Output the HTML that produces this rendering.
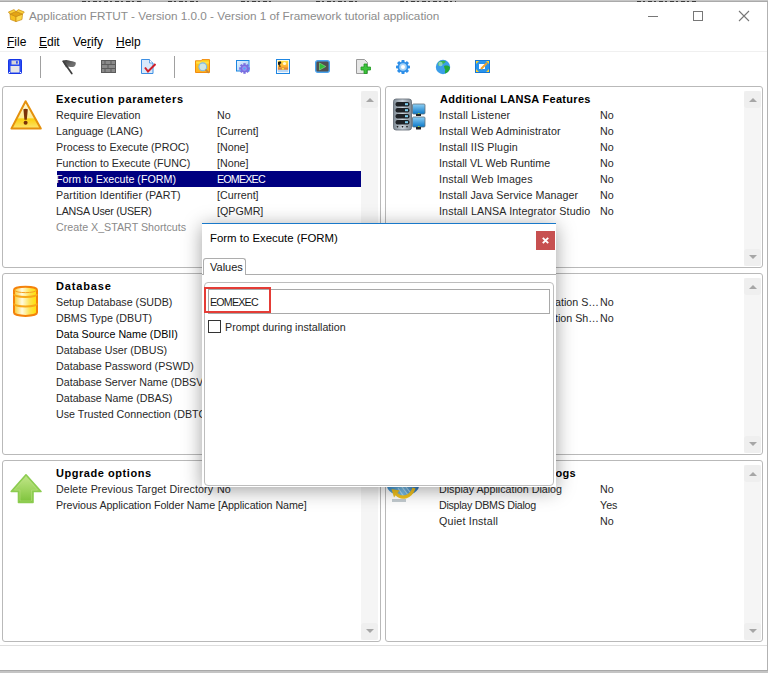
<!DOCTYPE html>
<html><head><meta charset="utf-8">
<style>
*{margin:0;padding:0;box-sizing:border-box}
html,body{width:768px;height:673px;overflow:hidden;background:#fff;position:relative;font-family:"Liberation Sans",sans-serif;}
.a{position:absolute}
.t{position:absolute;font-size:10.7px;line-height:16px;color:#282828;white-space:nowrap}
.b{font-weight:bold;color:#000;letter-spacing:0.3px;font-size:11px}
.panel{position:absolute;border:1px solid #b9b9b9;border-radius:3px;background:#fff;width:379px;height:182px}
.sb{position:absolute;width:17px;background:#f5f5f5}
.sbb{position:absolute;left:0;width:17px;height:17px;background:#efefef;border-radius:3px}
.up{position:absolute;left:5px;top:7px;width:0;height:0;border-left:4.5px solid transparent;border-right:4.5px solid transparent;border-bottom:4.5px solid #a6a6a6}
.dn{position:absolute;left:5px;top:6px;width:0;height:0;border-left:4.5px solid transparent;border-right:4.5px solid transparent;border-top:4.5px solid #a6a6a6}
.menu{position:absolute;top:35px;font-size:12px;line-height:14px;color:#000}
.menu u{text-decoration:underline;text-underline-offset:1px;text-decoration-thickness:1px}
</style></head><body>
<!-- top gray strip -->
<div class="a" style="left:0;top:0;width:768px;height:1px;background:#c6c6c6"></div>
<div class="a" style="left:0;top:1px;width:768px;height:1px;background:#aaaaaa"></div>
<div class="a" style="left:767px;top:2px;width:1px;height:668px;background:#b2b2b2"></div>
<div class="a" style="left:0;top:670px;width:768px;height:1px;background:#a9a9a9"></div>
<div class="a" style="left:0;top:671px;width:768px;height:2px;background:#c4c4c4"></div>

<!-- title -->
<div class="t" style="left:29px;top:8px;font-size:11.75px;line-height:16px;color:#8c8c8c">Application FRTUT - Version 1.0.0 - Version 1 of Framework tutorial application</div>

<!-- window buttons -->
<div class="a" style="left:648px;top:16px;width:10px;height:1px;background:#777"></div>
<div class="a" style="left:693px;top:11px;width:10px;height:10px;border:1px solid #777"></div>
<svg class="a" style="left:738px;top:10px" width="12" height="12"><path d="M1 1L11 11M11 1L1 11" stroke="#777" stroke-width="1.1"/></svg>

<!-- menu -->
<div class="menu" style="left:7px"><u>F</u>ile</div>
<div class="menu" style="left:39px"><u>E</u>dit</div>
<div class="menu" style="left:73px">Ve<u>r</u>ify</div>
<div class="menu" style="left:116px"><u>H</u>elp</div>
<div class="a" style="left:0;top:51px;width:767px;height:1px;background:#f0f0f0"></div>

<!-- status line -->
<div class="a" style="left:0;top:645px;width:767px;height:1px;background:#dedede"></div>

<!-- panels -->
<div class="panel" style="left:2px;top:86px"></div>
<div class="panel" style="left:385px;top:86px;width:378px"></div>
<div class="panel" style="left:2px;top:273px;height:182px"></div>
<div class="panel" style="left:385px;top:273px;width:378px;height:182px"></div>
<div class="panel" style="left:2px;top:460px;height:182px"></div>
<div class="panel" style="left:385px;top:460px;width:378px;height:182px"></div>


<!-- title icon -->
<svg class="a" style="left:8px;top:9px" width="17" height="14" viewBox="0 0 17 14">
<g stroke="#c98a12" stroke-width="0.7" stroke-linejoin="round">
<path d="M2 5 L8 7.5 L8 12.6 L2.5 10.5 Z" fill="#f6c01e"/>
<path d="M8 7.5 L14.5 5 L14 10.5 L8 12.6 Z" fill="#fcd84a"/>
<path d="M2 5 L8 2.5 L14.5 5 L8 7.5 Z" fill="#e3a414"/>
<path d="M2 5 L0.4 3 L6 0.6 L8 2.5 Z" fill="#fbd23a"/>
<path d="M8 2.5 L10.5 0.6 L16.3 3 L14.5 5 Z" fill="#fbd23a"/>
</g>
</svg>

<!-- toolbar -->
<svg class="a" style="left:8px;top:59px" width="14" height="15" viewBox="0 0 14 15">
<rect x="0.5" y="0.5" width="13" height="14" rx="0.8" fill="#2a4cf2" stroke="#1636e6"/>
<rect x="3.5" y="1.5" width="7.5" height="4" fill="#d6d6d6"/><rect x="8" y="2.2" width="1.8" height="2.4" fill="#2a4cf2"/>
<rect x="2.5" y="7" width="9" height="6.5" fill="#e6e6e6"/>
<rect x="1" y="13" width="1" height="1" fill="#fff"/><rect x="12" y="13" width="1" height="1" fill="#fff"/>
</svg>
<div class="a" style="left:40px;top:56px;width:1px;height:22px;background:#a0a0a0"></div>
<svg class="a" style="left:61px;top:59px" width="16" height="16" viewBox="0 0 16 16">
<defs><linearGradient id="flg" x1="0" y1="0" x2="1" y2="1"><stop offset="0" stop-color="#3a3a3a"/><stop offset="0.6" stop-color="#6a6a6a"/><stop offset="1" stop-color="#7a7a7a"/></linearGradient></defs>
<path d="M1.5 2.2 C3.5 0.8 6 0.6 8 1.6 C10 2.6 12.5 2.2 14.8 3.6 C15 5.6 14 7.8 12 8 C10 8.2 8.5 7.2 6.5 8 L5 8.5 Z" fill="url(#flg)"/>
<path d="M2.2 2.2 L10.8 14.6" stroke="#3f3f3f" stroke-width="1.7" stroke-linecap="round"/>
</svg>
<svg class="a" style="left:101px;top:60px" width="15" height="13" viewBox="0 0 15 13">
<rect x="0" y="0" width="15" height="13" fill="#5b5b5b"/>
<g fill="#8a8a8a"><rect x="1" y="1" width="2.5" height="3"/><rect x="4.5" y="1" width="5" height="3"/><rect x="10.5" y="1" width="3.5" height="3"/>
<rect x="1" y="5" width="5.5" height="3"/><rect x="7.5" y="5" width="6.5" height="3"/>
<rect x="1" y="9" width="2.5" height="3"/><rect x="4.5" y="9" width="5" height="3"/><rect x="10.5" y="9" width="3.5" height="3"/></g>
</svg>
<svg class="a" style="left:141px;top:59px" width="15" height="15" viewBox="0 0 15 15">
<path d="M0.5 0.5 H8.5 L12 4 V14.5 H0.5 Z" fill="#d8e9fb" stroke="#3d8fe3"/>
<path d="M8.5 0.5 V4 H12" fill="#fff" stroke="#3d8fe3" stroke-width="0.8"/>
<path d="M4 8.5 L7 12.5 L14.5 5" fill="none" stroke="#d0202a" stroke-width="2"/>
</svg>
<div class="a" style="left:174px;top:56px;width:1px;height:22px;background:#a0a0a0"></div>
<svg class="a" style="left:195px;top:59px" width="16" height="16" viewBox="0 0 16 16">
<defs><linearGradient id="fg" x1="0" y1="0" x2="0" y2="1"><stop offset="0" stop-color="#ffd21a"/><stop offset="1" stop-color="#ffb020"/></linearGradient></defs>
<path d="M0.5 1.8 H6 L7 0.6 H14.5 V13.5 H0.5 Z" fill="url(#fg)" stroke="#f28c0f" stroke-width="1"/>
<rect x="1.2" y="2.6" width="12.6" height="2" fill="#ffe14a"/>
<circle cx="7.8" cy="7.8" r="3.9" fill="#cfe6e4" stroke="#7cb8e8" stroke-width="1.1"/>
<path d="M10.6 10.6 L13.8 13.8" stroke="#c98a3a" stroke-width="1.8"/>
</svg>
<svg class="a" style="left:236px;top:59px" width="16" height="16" viewBox="0 0 16 16">
<defs><linearGradient id="bg2" x1="0" y1="0" x2="1" y2="1"><stop offset="0" stop-color="#eaf4ff"/><stop offset="1" stop-color="#9cc8f4"/></linearGradient></defs>
<rect x="0.5" y="1.5" width="12.5" height="10.5" fill="url(#bg2)" stroke="#1d86e0"/>
<g transform="translate(8.5,9.5)" fill="#7a6fe0">
<circle r="3.8"/>
<rect x="-1.2" y="-5.3" width="2.4" height="10.6"/>
<rect x="-1.2" y="-5.3" width="2.4" height="10.6" transform="rotate(45)"/>
<rect x="-1.2" y="-5.3" width="2.4" height="10.6" transform="rotate(90)"/>
<rect x="-1.2" y="-5.3" width="2.4" height="10.6" transform="rotate(135)"/>
</g>
<circle cx="8.5" cy="9.5" r="2.4" fill="#9a90f0"/><circle cx="8.5" cy="9.5" r="1.1" fill="#40b0f8"/>
</svg>
<svg class="a" style="left:276px;top:59px" width="14" height="15" viewBox="0 0 14 15">
<defs><linearGradient id="ig" x1="0" y1="0" x2="0" y2="1"><stop offset="0" stop-color="#ffe040"/><stop offset="0.55" stop-color="#ffb030"/><stop offset="0.8" stop-color="#d8803a"/><stop offset="1" stop-color="#c8dcf0"/></linearGradient></defs>
<rect x="0.5" y="0.5" width="13" height="14" fill="#fff" stroke="#1e86e2"/>
<rect x="1.8" y="1.8" width="10.4" height="10.2" fill="url(#ig)"/>
<circle cx="8.5" cy="4.5" r="1.6" fill="#fff8d8"/>
<path d="M2 3 L4.5 2.2 L5.5 4 L4 5 L4.5 8 L3.5 8 L3.2 5.5 L2 6 Z" fill="#1a1a1a"/>
<rect x="6" y="9" width="2" height="1.5" fill="#ffe040"/>
<rect x="1.8" y="11" width="10.4" height="2.2" fill="#b8d6f4"/>
</svg>
<svg class="a" style="left:315px;top:60px" width="15" height="13" viewBox="0 0 15 13">
<rect x="0.7" y="0.7" width="13.6" height="11.6" rx="2" fill="#4f4f4f" stroke="#4aa3ee" stroke-width="1.4"/>
<path d="M4.5 3 L10.8 6.5 L4.5 10 Z" fill="#2fbf3a" stroke="#8ee08a" stroke-width="0.6"/>
</svg>
<svg class="a" style="left:356px;top:59px" width="16" height="15" viewBox="0 0 16 15">
<path d="M0.5 0.5 H8.5 L11.5 3.5 V14.5 H0.5 Z" fill="#e6e6e6" stroke="#9a9a9a"/>
<path d="M8 5 H11 V8 H14.5 V11 H11 V14.5 H8 V11 H5 V8 H8 Z" fill="#3dc23d" stroke="#1f9a1f" stroke-width="0.8"/>
</svg>
<svg class="a" style="left:395px;top:59px" width="16" height="16" viewBox="0 0 16 16">
<g transform="translate(8,8)" fill="#2c8ee8">
<circle r="5.2"/>
<rect x="-1.6" y="-7" width="3.2" height="14" rx="0.8"/>
<rect x="-1.6" y="-7" width="3.2" height="14" rx="0.8" transform="rotate(45)"/>
<rect x="-1.6" y="-7" width="3.2" height="14" rx="0.8" transform="rotate(90)"/>
<rect x="-1.6" y="-7" width="3.2" height="14" rx="0.8" transform="rotate(135)"/>
</g>
<circle cx="8" cy="8" r="3.8" fill="#a8d4f8"/><circle cx="8" cy="8" r="2" fill="#fff"/>
</svg>
<svg class="a" style="left:435px;top:59px" width="16" height="16" viewBox="0 0 16 16">
<circle cx="8" cy="8" r="7.2" fill="#3a9de8"/>
<path d="M3 4 C5 1.5 9 1 11 2.5 C10 4 8 4.5 7 6 C6 7.5 4 7 3 6Z" fill="#39b54a"/>
<path d="M9 7 C11 6 14 6.5 15 8.5 C14.5 11.5 12.5 14 10 14.5 C9.5 12 11 11 9.5 9.5Z" fill="#22a838"/>
<circle cx="5.5" cy="5" r="2.2" fill="#bfe6ff" opacity="0.6"/>
</svg>
<svg class="a" style="left:475px;top:60px" width="15" height="13" viewBox="0 0 15 13">
<rect x="0.5" y="0.5" width="14" height="12" fill="#2a94ec" stroke="#1578d8"/>
<path d="M1 1 H4 L1 4Z M14 1 V4 L11 1Z M1 12 V9 L4 12Z M14 12 H11 L14 9Z" fill="#ffd02a"/>
<rect x="4" y="4" width="6" height="5" fill="#fff"/>
<path d="M6 9 L12 3" stroke="#f2a12a" stroke-width="2"/>
</svg>

<!-- ===== panel 1 ===== -->
<svg class="a" style="left:9px;top:98px" width="35" height="34" viewBox="0 0 35 34">
<defs><linearGradient id="wg" x1="0" y1="0" x2="0" y2="1"><stop offset="0" stop-color="#fffce8"/><stop offset="0.6" stop-color="#fdeb90"/><stop offset="0.65" stop-color="#fbcf10"/><stop offset="1" stop-color="#fde570"/></linearGradient></defs>
<path d="M16.6 3.2 L31.8 30.6 L2.4 30.6 Z" fill="url(#wg)" stroke="#e5900c" stroke-width="2" stroke-linejoin="round"/>
<path d="M14.4 11.3 Q16.6 10.3 18.8 11.3 L17.8 21.7 H15.4 Z" fill="#7a3208"/>
<circle cx="16.6" cy="24.8" r="2" fill="#7a3208"/>
</svg>
<div class="t b" style="left:56px;top:91px;letter-spacing:0.64px">Execution parameters</div>
<div class="t" style="left:56px;top:107px">Require Elevation</div>
<div class="t" style="left:56px;top:123px">Language (LANG)</div>
<div class="t" style="left:56px;top:139px">Process to Execute (PROC)</div>
<div class="t" style="left:56px;top:155px">Function to Execute (FUNC)</div>
<div class="a" style="left:57px;top:171px;width:304px;height:16px;background:#000080"></div>
<div class="t" style="left:56px;top:171px;color:#fff">Form to Execute (FORM)</div>
<div class="t" style="left:56px;top:187px;letter-spacing:0.15px">Partition Identifier (PART)</div>
<div class="t" style="left:56px;top:203px;letter-spacing:-0.25px">LANSA User (USER)</div>
<div class="t" style="left:56px;top:219px;color:#8a8a8a">Create X_START Shortcuts</div>
<div class="t" style="left:217px;top:107px">No</div>
<div class="t" style="left:217px;top:123px">[Current]</div>
<div class="t" style="left:217px;top:139px">[None]</div>
<div class="t" style="left:217px;top:155px">[None]</div>
<div class="t" style="left:217px;top:171px;color:#fff;letter-spacing:-0.8px">EOMEXEC</div>
<div class="t" style="left:217px;top:187px">[Current]</div>
<div class="t" style="left:217px;top:203px">[QPGMR]</div>
<div class="sb" style="left:361px;top:91px;height:175px"><div class="sbb" style="top:0"><div class="up"></div></div><div class="sbb" style="top:158px"><div class="dn"></div></div></div>

<!-- ===== panel 2 ===== -->
<svg class="a" style="left:392px;top:98px" width="34" height="33" viewBox="0 0 34 33">
<defs><linearGradient id="sg" x1="0" y1="0" x2="1" y2="0"><stop offset="0" stop-color="#7d8993"/><stop offset="0.5" stop-color="#c9d2da"/><stop offset="1" stop-color="#7d8993"/></linearGradient>
<linearGradient id="mg" x1="0" y1="0" x2="0" y2="1"><stop offset="0" stop-color="#8fd0f5"/><stop offset="1" stop-color="#0a78c8"/></linearGradient></defs>
<rect x="1.5" y="1" width="18" height="31" rx="2.5" fill="url(#sg)" stroke="#5d6670" stroke-width="0.8"/>
<g fill="#1e2226"><rect x="3.5" y="4" width="14" height="4.5" rx="2"/><rect x="3.5" y="10" width="14" height="4.5" rx="2"/><rect x="3.5" y="16" width="14" height="4.5" rx="2"/><rect x="3.5" y="22" width="14" height="4.5" rx="2"/></g>
<g fill="#7fd0f0"><rect x="13" y="5.2" width="3" height="2"/><rect x="13" y="11.2" width="3" height="2"/><rect x="13" y="17.2" width="3" height="2"/><rect x="13" y="23.2" width="3" height="2"/></g>
<g fill="#222"><path d="M4.5 28 h2 l-1 2z M9.5 28 h2 l-1 2z M14 28 h2 l-1 2z"/></g>
<rect x="20.5" y="6" width="12.5" height="10" rx="1" fill="url(#mg)" stroke="#5f6f7a" stroke-width="0.8"/>
<rect x="24" y="16" width="5" height="2" fill="#222"/><rect x="26" y="15" width="1.5" height="1" fill="#8ccf3a"/>
<rect x="20.5" y="19" width="12.5" height="10" rx="1" fill="url(#mg)" stroke="#5f6f7a" stroke-width="0.8"/>
<rect x="24" y="29" width="5" height="2.5" fill="#222"/><rect x="26" y="28" width="1.5" height="1" fill="#8ccf3a"/>
</svg>
<div class="t b" style="left:440px;top:91px">Additional LANSA Features</div>
<div class="t" style="left:439px;top:107px;letter-spacing:0.15px">Install Listener</div>
<div class="t" style="left:439px;top:123px;letter-spacing:0.15px">Install Web Administrator</div>
<div class="t" style="left:439px;top:139px;letter-spacing:0.12px">Install IIS Plugin</div>
<div class="t" style="left:439px;top:155px">Install VL Web Runtime</div>
<div class="t" style="left:439px;top:171px;letter-spacing:0.17px">Install Web Images</div>
<div class="t" style="left:439px;top:187px;letter-spacing:0.07px">Install Java Service Manager</div>
<div class="t" style="left:439px;top:203px;letter-spacing:0.13px">Install LANSA Integrator Studio</div>
<div class="t" style="left:600px;top:107px">No</div>
<div class="t" style="left:600px;top:123px">No</div>
<div class="t" style="left:600px;top:139px">No</div>
<div class="t" style="left:600px;top:155px">No</div>
<div class="t" style="left:600px;top:171px">No</div>
<div class="t" style="left:600px;top:187px">No</div>
<div class="t" style="left:600px;top:203px">No</div>
<div class="sb" style="left:744px;top:91px;height:175px"><div class="sbb" style="top:0"><div class="up"></div></div><div class="sbb" style="top:158px"><div class="dn"></div></div></div>

<!-- ===== panel 3 ===== -->
<svg class="a" style="left:12px;top:285px" width="28" height="33" viewBox="0 0 28 33">
<defs><linearGradient id="dg" x1="0" y1="0" x2="1" y2="0"><stop offset="0" stop-color="#fbc92a"/><stop offset="0.35" stop-color="#fffbe0"/><stop offset="0.7" stop-color="#fde24a"/><stop offset="1" stop-color="#ffe000"/></linearGradient></defs>
<path d="M2 5 C2 0.8 25 0.8 25 5 V27.5 C25 32 2 32 2 27.5 Z" fill="url(#dg)" stroke="#f4820a" stroke-width="2"/>
<path d="M2.5 5 C2.5 8.5 24.5 8.5 24.5 5" fill="none" stroke="#f6a020" stroke-width="1"/>
<path d="M2 9 C2 13 25 13 25 9" fill="none" stroke="#f8a818" stroke-width="1.8"/>
<path d="M2 18.5 C2 22.5 25 22.5 25 18.5" fill="none" stroke="#f8a818" stroke-width="1.8"/>
</svg>
<div class="t b" style="left:56px;top:278px;letter-spacing:0.85px">Database</div>
<div class="t" style="left:56px;top:294px">Setup Database (SUDB)</div>
<div class="t" style="left:56px;top:310px">DBMS Type (DBUT)</div>
<div class="t" style="left:56px;top:326px;color:#000">Data Source Name (DBII)</div>
<div class="t" style="left:56px;top:342px">Database User (DBUS)</div>
<div class="t" style="left:56px;top:358px">Database Password (PSWD)</div>
<div class="t" style="left:56px;top:374px">Database Server Name (DBSV)</div>
<div class="t" style="left:56px;top:390px">Database Name (DBAS)</div>
<div class="t" style="left:56px;top:406px">Use Trusted Connection (DBTC)</div>

<!-- ===== panel 4 ===== -->
<div class="t" style="left:399px;top:294px;width:200px;text-align:right">Create Application S…</div>
<div class="t" style="left:600px;top:294px">No</div>
<div class="t" style="left:399px;top:310px;width:200px;text-align:right">Create Application Sh…</div>
<div class="t" style="left:600px;top:310px">No</div>
<div class="sb" style="left:744px;top:278px;height:175px"><div class="sbb" style="top:0"><div class="up"></div></div><div class="sbb" style="top:158px"><div class="dn"></div></div></div>

<!-- ===== panel 5 ===== -->
<svg class="a" style="left:10px;top:473px" width="33" height="32" viewBox="0 0 33 32">
<defs><linearGradient id="ag" x1="0" y1="0" x2="0" y2="1"><stop offset="0" stop-color="#c2e68a"/><stop offset="0.6" stop-color="#9ad25a"/><stop offset="1" stop-color="#7cc23a"/></linearGradient></defs>
<path d="M16 1.8 L31 18.5 L23 18.5 L23 29.5 L8.5 29.5 L8.5 18.5 L1.2 18.5 Z" fill="url(#ag)" stroke="#8ccc50" stroke-width="1.6" stroke-linejoin="round"/>
<path d="M16 4 L27.5 17 L21.5 17 L21.5 28 L10 28 L10 17 L4.5 17 Z" fill="none" stroke="#b8e07f" stroke-width="0.8" stroke-linejoin="round" opacity="0.7"/>
</svg>
<div class="t b" style="left:56px;top:465px;letter-spacing:0.55px">Upgrade options</div>
<div class="t" style="left:56px;top:481px;letter-spacing:0.11px">Delete Previous Target Directory</div>
<div class="t" style="left:217px;top:481px">No</div>
<div class="t" style="left:56px;top:497px;letter-spacing:-0.06px">Previous Application Folder Name [Application Name]</div>
<div class="sb" style="left:361px;top:465px;height:175px"><div class="sbb" style="top:0"><div class="up"></div></div><div class="sbb" style="top:158px"><div class="dn"></div></div></div>

<!-- ===== panel 6 ===== -->
<svg class="a" style="left:386px;top:462px" width="40" height="44" viewBox="386 462 40 44">
<defs><linearGradient id="gg" x1="0" y1="0" x2="1" y2="0"><stop offset="0" stop-color="#3a8fd0"/><stop offset="0.5" stop-color="#7cc0e8"/><stop offset="1" stop-color="#2a70b8"/></linearGradient></defs>
<ellipse cx="403" cy="484" rx="16.5" ry="12" fill="url(#gg)"/>
<path d="M398 488 L404 497 M402 487 L408 495 M406 487 L410 492" stroke="#bfe4f6" stroke-width="1.2" opacity="0.8"/>
<rect x="392" y="499" width="14" height="3" fill="#c3cbd0"/>
<path d="M414 488 C411 497 402 500 396.5 494" fill="none" stroke="#f2c21e" stroke-width="3.2"/>
<path d="M391.5 489 L399.5 490.5 L394 497.5 Z" fill="#f2c21e"/>
</svg>
<div class="t b" style="left:375px;top:465px;width:201px;text-align:right">Installation Dialogs</div>
<div class="t" style="left:439px;top:481px">Display Application Dialog</div>
<div class="t" style="left:439px;top:497px;letter-spacing:-0.28px">Display DBMS Dialog</div>
<div class="t" style="left:439px;top:513px;letter-spacing:0.2px">Quiet Install</div>
<div class="t" style="left:600px;top:481px">No</div>
<div class="t" style="left:600px;top:497px">Yes</div>
<div class="t" style="left:600px;top:513px">No</div>
<div class="sb" style="left:744px;top:465px;height:175px"><div class="sbb" style="top:0"><div class="up"></div></div><div class="sbb" style="top:158px"><div class="dn"></div></div></div>

<!-- ===== top strip fragments ===== -->
<div class="a" style="left:82px;top:1px;width:59px;height:1px;background:repeating-linear-gradient(90deg,#3a3a3a 0 4px,transparent 4px 6px,#3a3a3a 6px 8px,transparent 8px 11px)"></div>
<div class="a" style="left:168px;top:1px;width:30px;height:1px;background:repeating-linear-gradient(90deg,#3a3a3a 0 4px,transparent 4px 6px,#3a3a3a 6px 8px,transparent 8px 11px)"></div>
<div class="a" style="left:241px;top:1px;width:31px;height:1px;background:repeating-linear-gradient(90deg,#3a3a3a 0 4px,transparent 4px 6px,#3a3a3a 6px 8px,transparent 8px 11px)"></div>
<div class="a" style="left:316px;top:1px;width:44px;height:1px;background:repeating-linear-gradient(90deg,#3a3a3a 0 4px,transparent 4px 6px,#3a3a3a 6px 8px,transparent 8px 11px)"></div>
<div class="a" style="left:400px;top:1px;width:56px;height:1px;background:repeating-linear-gradient(90deg,#3a3a3a 0 4px,transparent 4px 6px,#3a3a3a 6px 8px,transparent 8px 11px)"></div>
<div class="a" style="left:637px;top:1px;width:61px;height:1px;background:repeating-linear-gradient(90deg,#3a3a3a 0 4px,transparent 4px 6px,#3a3a3a 6px 8px,transparent 8px 11px)"></div>

<!-- ===== dialog ===== -->
<div class="a" style="left:202px;top:223px;width:354px;height:264px;background:#fff;border-top:1px solid #1979ca;box-shadow:0 3px 18px rgba(0,0,0,0.38)">
  <div class="t" style="left:8px;top:6px;font-size:11.4px;color:#000">Form to Execute (FORM)</div>
  <div class="a" style="left:334px;top:7px;width:19px;height:19px;background:#c75050"><svg class="a" style="left:0;top:0" width="19" height="19"><path d="M6.8 6.8 L12.2 12.2 M12.2 6.8 L6.8 12.2" stroke="#fff" stroke-width="1.9"/></svg></div>
  <div class="a" style="left:0;top:50px;width:354px;height:1px;background:#adadad"></div>
  <div class="a" style="left:1px;top:34px;width:43px;height:17px;background:#fff;border:1px solid #adadad;border-bottom:none;border-radius:3px 3px 0 0"></div>
  <div class="t" style="left:8px;top:35px;font-size:11px;color:#1a1a1a">Values</div>
  <div class="a" style="left:2px;top:58px;width:350px;height:204px;border:1px solid #bdbdbd;border-radius:4px"></div>
  <div class="a" style="left:6px;top:65px;width:342px;height:25px;border:1px solid #a9a9a9"></div>
  <div class="a" style="left:2px;top:63px;width:67px;height:26px;border:2px solid #e43c36"></div>
  <div class="t" style="left:8px;top:70px;color:#1a1a1a;letter-spacing:-0.8px">EOMEXEC</div>
  <div class="a" style="left:6px;top:96px;width:13px;height:13px;border:1px solid #333"></div>
  <div class="t" style="left:23px;top:95px;font-size:10.7px">Prompt during installation</div>
</div>

</body></html>
